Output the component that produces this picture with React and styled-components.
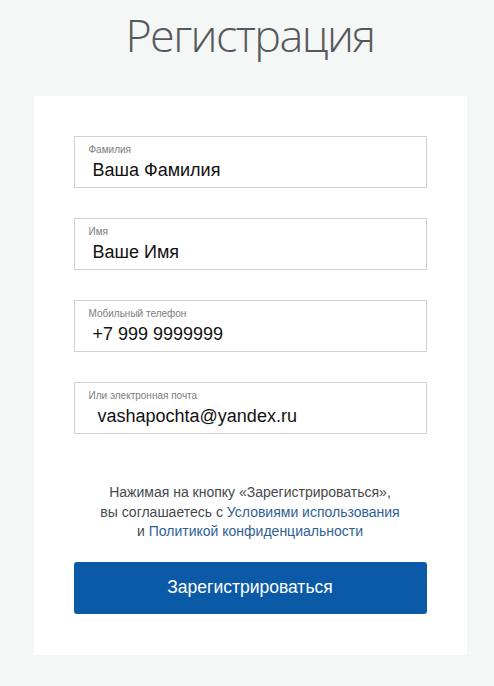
import styled, { createGlobalStyle } from 'styled-components'

const GlobalStyle = createGlobalStyle`
  html, body {
    margin: 0;
    padding: 0;
    background-color: #f5f6f6;
  }
`;

const fields = [
  { label: 'Фамилия', value: 'Ваша Фамилия', indent: 18 },
  { label: 'Имя', value: 'Ваше Имя', indent: 18 },
  { label: 'Мобильный телефон', value: '+7 999 9999999', indent: 18 },
  { label: 'Или электронная почта', value: 'vashapochta@yandex.ru', indent: 23 },
];

const App = () => {
  return (
    <Page>
      <GlobalStyle />
      <Title>Регистрация</Title>
      <Card>
        <FieldList>
          {fields.map((f) => (
            <Field key={f.label}>
              <FieldLabel>{f.label}</FieldLabel>
              <FieldValue $indent={f.indent}>{f.value}</FieldValue>
            </Field>
          ))}
        </FieldList>
        <Agreement>
          Нажимая на кнопку «Зарегистрироваться»,
          <br />
          вы соглашаетесь с <Link href="#">Условиями использования</Link>
          <br />
          и <Link href="#">Политикой конфиденциальности</Link>
        </Agreement>
        <SubmitButton type="button">Зарегистрироваться</SubmitButton>
      </Card>
    </Page>
  );
};

export default App;

const Page = styled.div`
  width: 494px;
  min-height: 686px;
  background-color: #f5f6f6;
  display: flex;
  flex-direction: column;
  align-items: center;
  padding: 3px 0 0 6px;
  box-sizing: border-box;
`;

const Title = styled.h1`
  margin: 0;
  font-family: 'Open Sans', 'Lato', sans-serif;
  font-weight: 300;
  font-size: 45px;
  line-height: 64px;
  color: #55595d;
  letter-spacing: -1.6px;
`;

const Card = styled.div`
  width: 433px;
  margin-top: 29px;
  background-color: #ffffff;
  box-sizing: border-box;
  padding: 40px 40px 41px;
  display: flex;
  flex-direction: column;
`;

const FieldList = styled.div`
  display: flex;
  flex-direction: column;
  gap: 30px;
`;

const Field = styled.div`
  height: 52px;
  box-sizing: border-box;
  border: 1px solid #cfd1d3;
  padding: 7px 0 0 14px;
  display: flex;
  flex-direction: column;
  font-family: 'Liberation Sans', Arial, sans-serif;
`;

const FieldLabel = styled.span`
  font-size: 10px;
  line-height: 12px;
  color: #7a7d80;
`;

const FieldValue = styled.span`
  margin-left: ${props => props.$indent - 14}px;
  margin-top: 4px;
  font-size: 18px;
  line-height: 20px;
  color: #111111;
`;

const Agreement = styled.p`
  margin: 49px 0 0 0;
  text-align: center;
  font-family: 'Liberation Sans', Arial, sans-serif;
  font-size: 14px;
  line-height: 19.5px;
  color: #45494c;
`;

const Link = styled.a`
  color: #2e5f96;
  text-decoration: none;
`;

const SubmitButton = styled.button`
  margin-top: 20px;
  height: 52px;
  border: none;
  border-radius: 3px;
  background-color: #0b5aa8;
  color: #ffffff;
  font-family: 'Liberation Sans', Arial, sans-serif;
  font-size: 17.5px;
  cursor: pointer;
`;
